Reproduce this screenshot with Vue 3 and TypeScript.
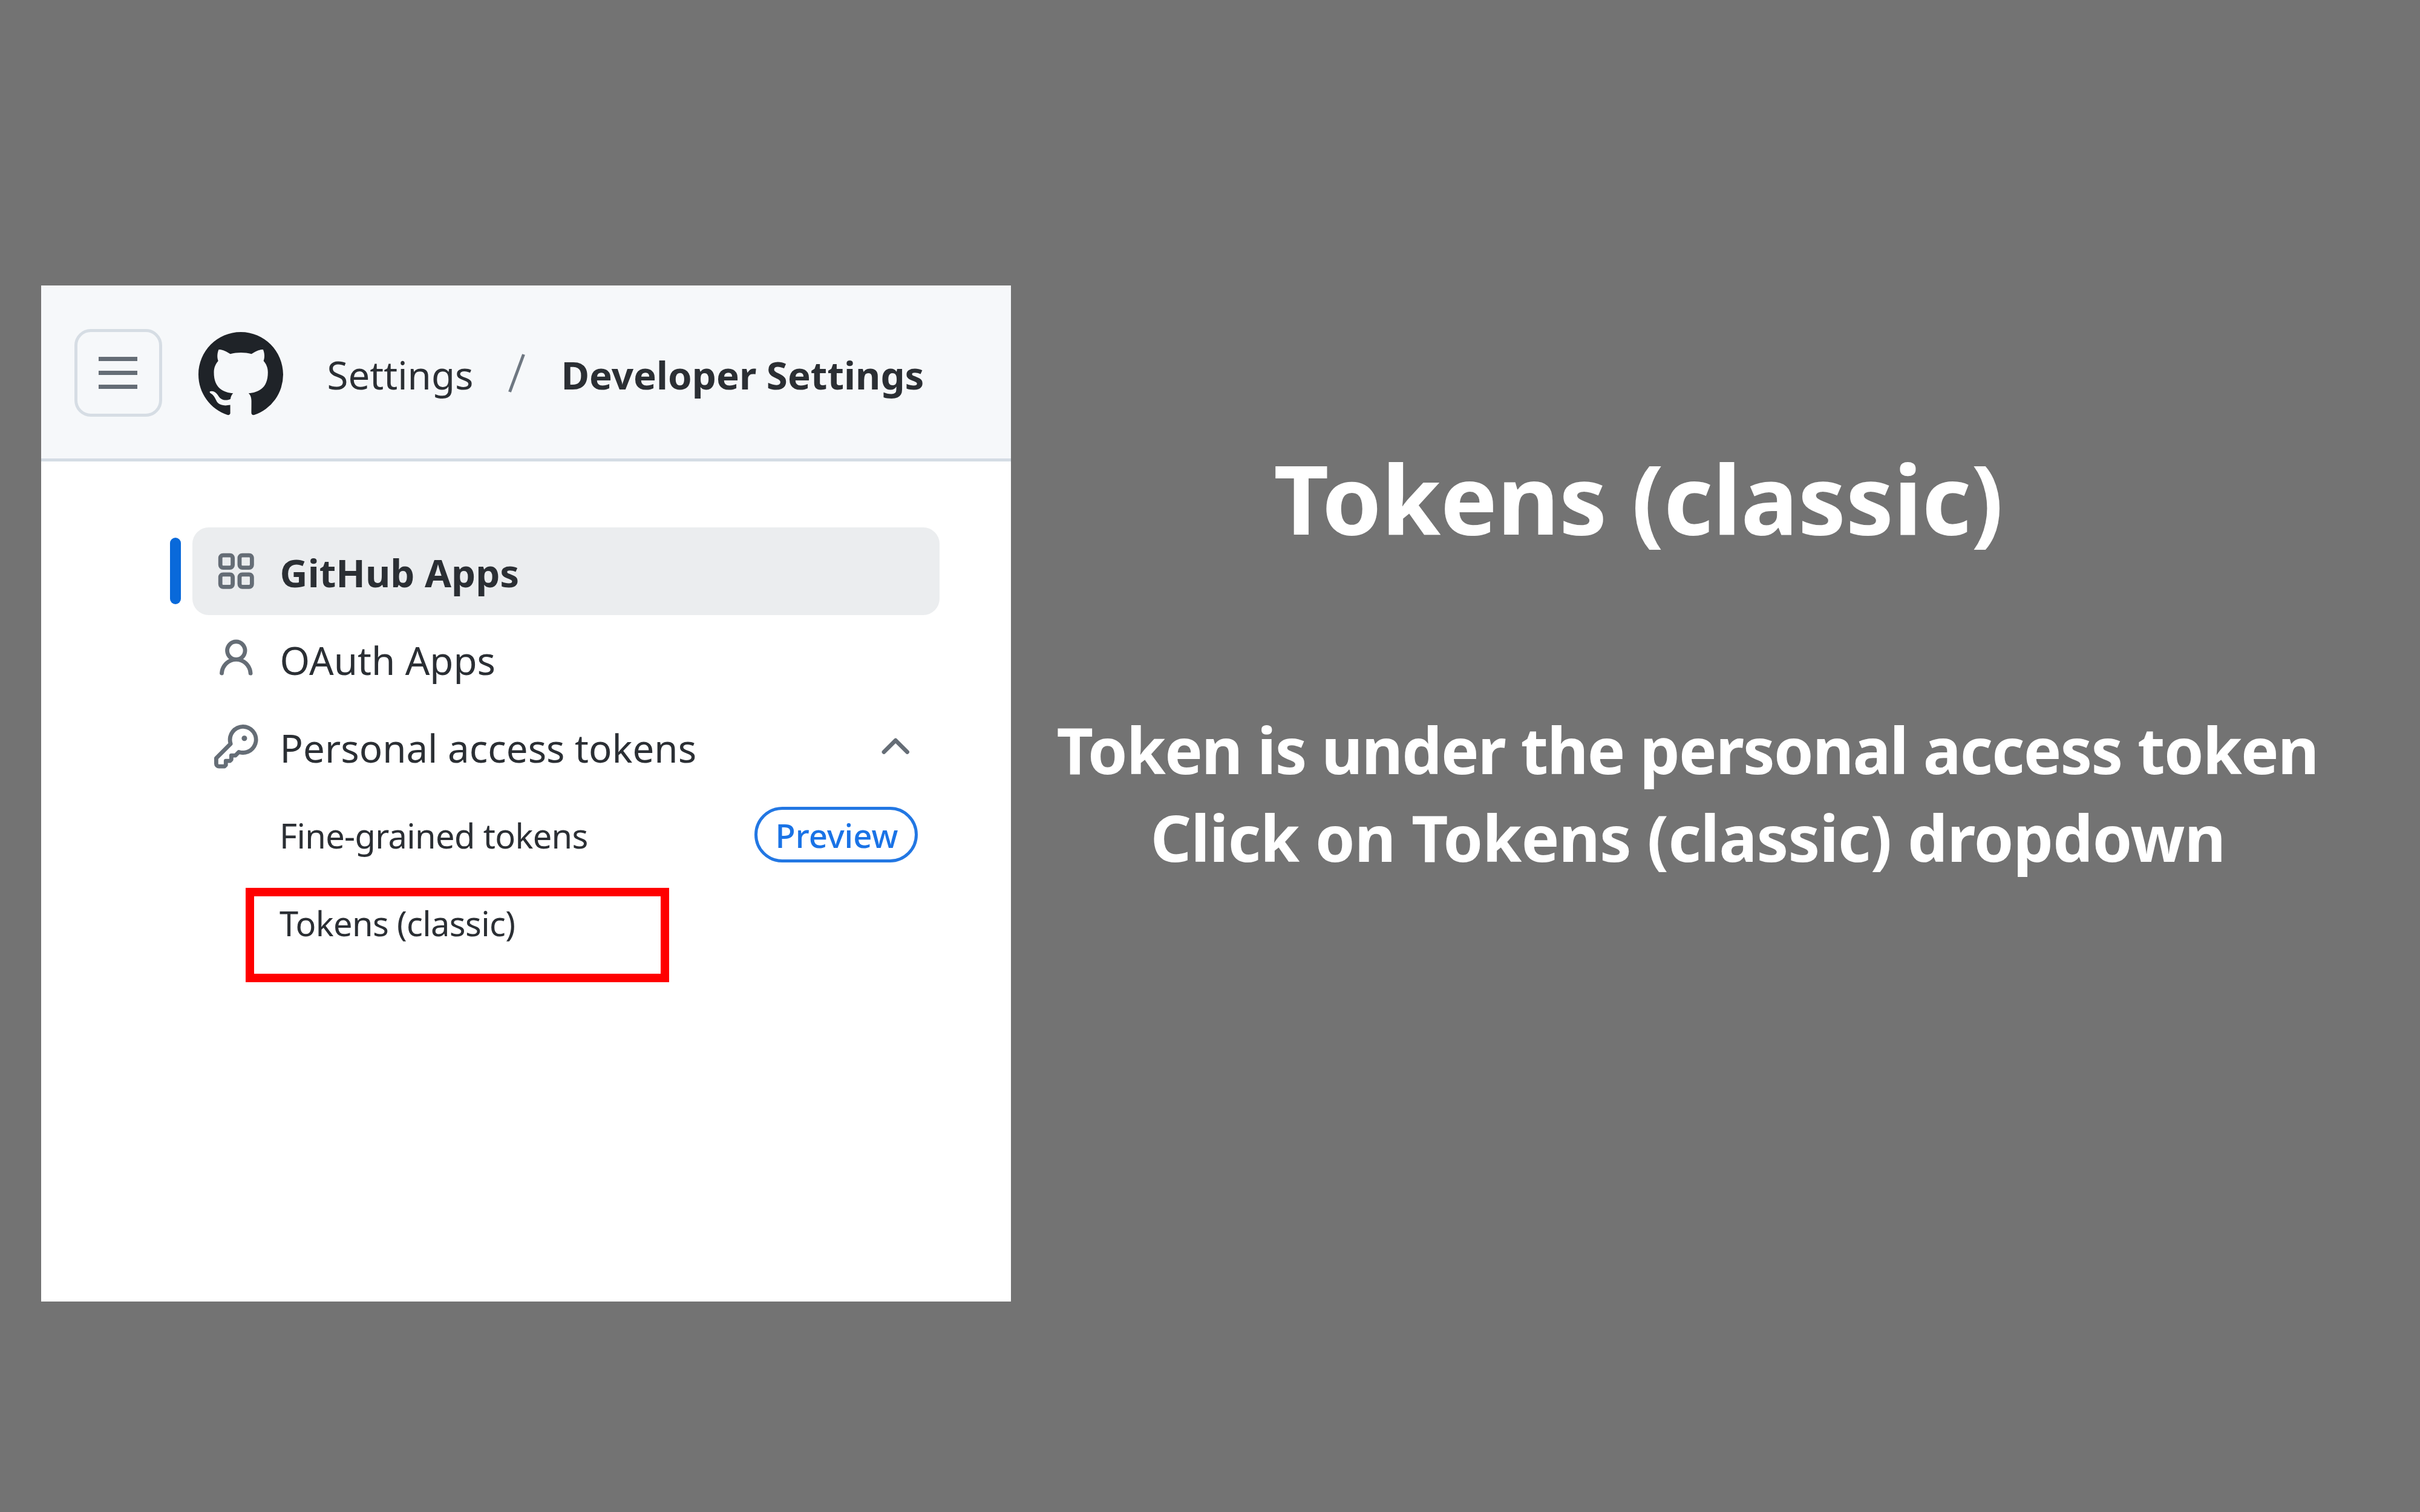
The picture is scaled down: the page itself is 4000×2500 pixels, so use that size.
<script setup lang="ts">
interface NavItem {
  label: string
  icon: string
  active?: boolean
  expanded?: boolean
}

const items: NavItem[] = [
  {
    label: 'GitHub Apps',
    active: true,
    icon: 'M1.5 3.25c0-.966.784-1.75 1.75-1.75h2.5c.966 0 1.75.784 1.75 1.75v2.5A1.75 1.75 0 0 1 5.75 7.5h-2.5A1.75 1.75 0 0 1 1.5 5.75Zm7 0c0-.966.784-1.75 1.75-1.75h2.5c.966 0 1.75.784 1.75 1.75v2.5a1.75 1.75 0 0 1-1.75 1.75h-2.5A1.75 1.75 0 0 1 8.5 5.75Zm-7 7c0-.966.784-1.75 1.75-1.75h2.5c.966 0 1.75.784 1.75 1.75v2.5a1.75 1.75 0 0 1-1.75 1.75h-2.5a1.75 1.75 0 0 1-1.75-1.75Zm7 0c0-.966.784-1.75 1.75-1.75h2.5c.966 0 1.75.784 1.75 1.75v2.5a1.75 1.75 0 0 1-1.75 1.75h-2.5a1.75 1.75 0 0 1-1.75-1.75ZM3.25 3a.25.25 0 0 0-.25.25v2.5c0 .138.112.25.25.25h2.5A.25.25 0 0 0 6 5.75v-2.5A.25.25 0 0 0 5.75 3Zm7 0a.25.25 0 0 0-.25.25v2.5c0 .138.112.25.25.25h2.5a.25.25 0 0 0 .25-.25v-2.5a.25.25 0 0 0-.25-.25Zm-7 7a.25.25 0 0 0-.25.25v2.5c0 .138.112.25.25.25h2.5a.25.25 0 0 0 .25-.25v-2.5a.25.25 0 0 0-.25-.25Zm7 0a.25.25 0 0 0-.25.25v2.5c0 .138.112.25.25.25h2.5a.25.25 0 0 0 .25-.25v-2.5a.25.25 0 0 0-.25-.25Z',
  },
  {
    label: 'OAuth Apps',
    icon: 'M10.561 8.073a6.005 6.005 0 0 1 3.432 5.142.75.75 0 1 1-1.498.07 4.5 4.5 0 0 0-8.99 0 .75.75 0 0 1-1.498-.07 6.004 6.004 0 0 1 3.431-5.142 3.999 3.999 0 1 1 5.123 0ZM10.5 5a2.5 2.5 0 1 0-5 0 2.5 2.5 0 0 0 5 0Z',
  },
  {
    label: 'Personal access tokens',
    expanded: true,
    icon: 'M10.5 0a5.499 5.499 0 1 1-1.288 10.848l-.932.932a.749.749 0 0 1-.53.22H7v.75a.749.749 0 0 1-.22.53l-.5.5a.749.749 0 0 1-.53.22H5v.75a.749.749 0 0 1-.22.53l-.5.5a.749.749 0 0 1-.53.22h-2A1.75 1.75 0 0 1 0 14.25v-2c0-.199.079-.389.22-.53l4.932-4.932A5.5 5.5 0 0 1 10.5 0Zm-4 5.5c-.001.431.069.86.205 1.269a.75.75 0 0 1-.181.768L1.5 12.56v1.69c0 .138.112.25.25.25h1.69l.06-.06v-1.19a.75.75 0 0 1 .75-.75h1.19l.06-.06v-1.19a.75.75 0 0 1 .75-.75h1.19l1.023-1.025a.75.75 0 0 1 .768-.18A4 4 0 1 0 6.5 5.5ZM11 6a1 1 0 1 1 0-2 1 1 0 0 1 0 2Z',
  },
]
</script>

<template>
  <main class="slide">
    <section class="panel">
      <header class="top">
        <button class="menu" type="button" aria-label="Open menu">
          <svg viewBox="0 0 64 56"><path d="M0 4.5h64M0 27.5h64M0 50.5h64" /></svg>
        </button>
        <svg class="mark" viewBox="0 0 16 15.7" preserveAspectRatio="none">
          <path
            d="M8 0C3.58 0 0 3.58 0 8c0 3.54 2.29 6.53 5.47 7.59.4.07.55-.17.55-.38 0-.19-.01-.82-.01-1.49-2.01.37-2.53-.49-2.69-.94-.09-.23-.48-.94-.82-1.13-.28-.15-.68-.52-.01-.53.63-.01 1.08.58 1.23.82.72 1.21 1.87.87 2.33.66.07-.52.28-.87.51-1.07-1.78-.2-3.64-.89-3.64-3.95 0-.87.31-1.59.82-2.15-.08-.2-.36-1.02.08-2.12 0 0 .67-.21 2.2.82.64-.18 1.32-.27 2-.27s1.36.09 2 .27c1.53-1.04 2.2-.82 2.2-.82.44 1.1.16 1.92.08 2.12.51.56.82 1.27.82 2.15 0 3.07-1.87 3.75-3.65 3.95.29.25.54.73.54 1.48 0 1.07-.01 1.93-.01 2.2 0 .21.15.46.55.38A8.01 8.01 0 0 0 16 8c0-4.42-3.58-8-8-8Z"
          />
        </svg>
        <span class="crumb first">Settings</span>
        <svg class="slash" viewBox="0 0 28 66"><path d="M25.5 2L2.5 64" /></svg>
        <span class="crumb current">Developer Settings</span>
      </header>

      <nav class="nav">
        <a v-for="item in items" :key="item.label" class="row" :class="{ active: item.active }">
          <svg class="icon" viewBox="0 0 16 16"><path :d="item.icon" /></svg>
          <span class="label">{{ item.label }}</span>
          <svg v-if="item.expanded" class="chevron" viewBox="0 0 16 16">
            <path
              d="M3.22 10.53a.749.749 0 0 1 0-1.06l4.25-4.25a.749.749 0 0 1 1.06 0l4.25 4.25a.749.749 0 1 1-1.06 1.06L8 6.811 4.28 10.53a.749.749 0 0 1-1.06 0Z"
            />
          </svg>
        </a>
        <a class="row sub">
          <span class="label">Fine-grained tokens</span>
          <span class="pill"><span class="preview">Preview</span></span>
        </a>
        <a class="row sub">
          <span class="label">Tokens (classic)</span>
          <span class="highlight"></span>
        </a>
      </nav>
    </section>

    <section class="copy">
      <h1>Tokens (classic)</h1>
      <p>
        <span class="line one">Token is under the personal access token</span>
        <span class="line two">Click on Tokens (classic) dropdown</span>
      </p>
    </section>
  </main>
</template>

<style>
body {
  margin: 0;
  background: #737373;
}
</style>

<style scoped>
.slide {
  box-sizing: border-box;
  width: 4000px;
  height: 2500px;
  padding: 472px 0 0 68px;
  display: flex;
  align-items: flex-start;
  overflow: hidden;
  background: #737373;
  font-family: 'Noto Sans', sans-serif;
}
.panel {
  flex: none;
  width: 1603px;
  height: 1680px;
  background: #fff;
  color: #2b2f34;
}
.top {
  box-sizing: border-box;
  height: 291px;
  padding: 3px 0 0 54.5px;
  display: flex;
  align-items: center;
  background: #f6f8fa;
  border-bottom: 5px solid #d4dce4;
}
.menu {
  box-sizing: border-box;
  width: 145px;
  height: 145px;
  padding: 0;
  display: flex;
  align-items: center;
  justify-content: center;
  background: transparent;
  border: 5px solid #d6dde4;
  border-radius: 27px;
}
.menu svg {
  width: 64px;
  height: 56px;
  fill: none;
  stroke: #656d76;
  stroke-width: 7;
}
.mark {
  width: 140px;
  height: 138px;
  margin: 2px 0 0 60px;
  fill: #1f2328;
}
.crumb {
  padding-top: 6px;
  font-size: 63.6px;
  line-height: 90px;
  white-space: nowrap;
}
.first {
  width: 246px;
  margin-left: 73px;
}
.slash {
  width: 28px;
  height: 66px;
  margin-left: 53px;
  fill: none;
  stroke: #6e7781;
  stroke-width: 5;
}
.current {
  margin-left: 60px;
  font-weight: 680;
}
.nav {
  width: 1235px;
  margin: 109px 0 0 250px;
}
.row {
  position: relative;
  box-sizing: border-box;
  height: 145px;
  padding: 0 36px;
  display: flex;
  align-items: center;
  border-radius: 27px;
}
.active {
  background: #ebedef;
}
.active::before {
  content: '';
  position: absolute;
  left: -37px;
  top: 17px;
  width: 18px;
  height: 110px;
  border-radius: 9px;
  background: #0969da;
}
.icon,
.chevron {
  width: 72.6px;
  height: 72.6px;
  fill: #656d76;
}
.label {
  flex: 1;
  padding-top: 5px;
  margin-left: 36px;
  font-size: 63.6px;
  line-height: 90px;
  white-space: nowrap;
}
.active .label {
  font-weight: 680;
}
.sub {
  padding-left: 144px;
}
.sub .label {
  margin-left: 0;
  padding-top: 2px;
  font-size: 56px;
  letter-spacing: -0.66px;
}
.pill {
  box-sizing: border-box;
  width: 270px;
  height: 92px;
  display: flex;
  align-items: center;
  justify-content: center;
  border: 5px solid #2277e3;
  border-radius: 46px;
  color: #1a73e6;
  font-size: 54.5px;
  font-weight: 540;
  line-height: 78px;
}
.preview {
  padding: 2px 0 0 2px;
}
.highlight {
  position: absolute;
  box-sizing: border-box;
  left: 88px;
  top: 16px;
  width: 700px;
  height: 156px;
  border: 14px solid #f00;
}
.copy {
  flex: none;
  width: 2236px;
  padding-top: 251px;
  color: #fff;
  text-align: center;
  font-weight: 670;
  white-space: nowrap;
}
h1 {
  margin: 0;
  padding-right: 162px;
  font-size: 158px;
  font-weight: 670;
  letter-spacing: -0.4px;
  line-height: 200px;
}
p {
  margin: 244px 0 0;
  font-size: 105px;
  line-height: 145px;
}
.line {
  display: block;
}
.one {
  letter-spacing: -1.75px;
}
.two {
  padding-left: 2px;
  letter-spacing: -0.75px;
}
</style>
